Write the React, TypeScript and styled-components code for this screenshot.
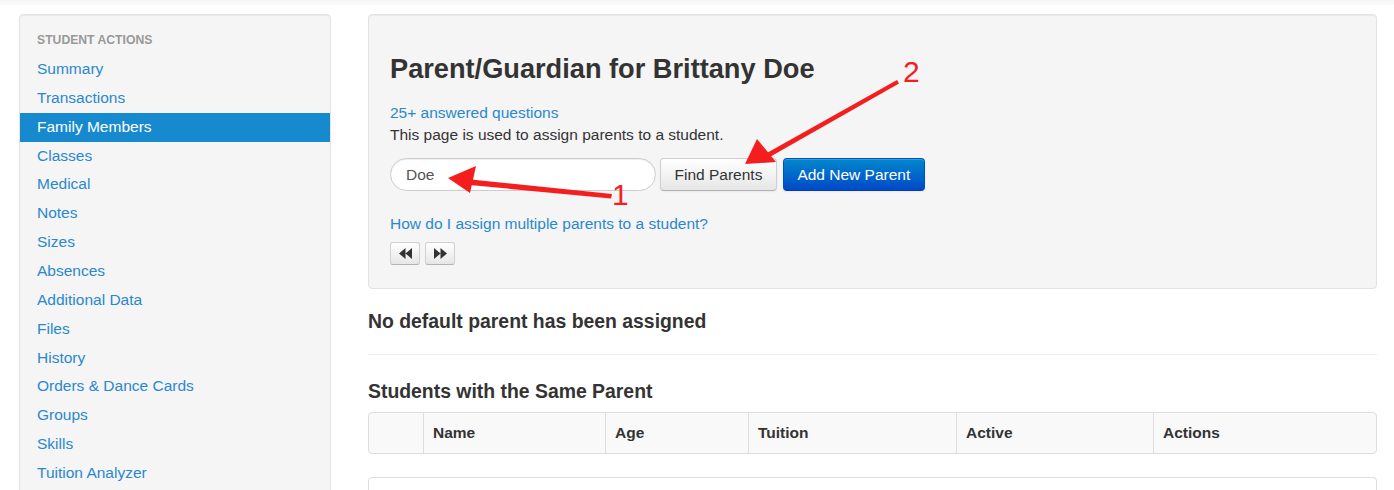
import React from 'react';
import styled, { createGlobalStyle } from 'styled-components';

const GlobalStyle = createGlobalStyle`
  html, body {
    margin: 0;
    padding: 0;
    background: #fff;
    font-family: "Liberation Sans", Arial, sans-serif;
    color: #333;
  }
`;

const MENU = [
  'Summary',
  'Transactions',
  'Family Members',
  'Classes',
  'Medical',
  'Notes',
  'Sizes',
  'Absences',
  'Additional Data',
  'Files',
  'History',
  'Orders & Dance Cards',
  'Groups',
  'Skills',
  'Tuition Analyzer',
];

const COLUMNS = [
  { label: '', width: 54 },
  { label: 'Name', width: 182 },
  { label: 'Age', width: 143 },
  { label: 'Tuition', width: 208 },
  { label: 'Active', width: 197 },
  { label: 'Actions', width: 0 },
];

function RewindIcon({ flip }: { flip?: boolean }) {
  return (
    <svg width="15" height="13" viewBox="0 0 15 13" style={flip ? { transform: 'scaleX(-1)' } : undefined}>
      <path d="M7.5 1 L1 6.5 L7.5 12 Z M14 1 L7.5 6.5 L14 12 Z" fill="#333" />
    </svg>
  );
}

function Annotations() {
  return (
    <Overlay width="1394" height="490" viewBox="0 0 1394 490">
      <g fill="#f51e1e" stroke="none">
        <path d="M612 194 L471 179.5 L470 185 L611 198.5 Z" />
        <path d="M448 178 L476 166 L470 193 Z" />
        <path d="M897 80 L899 83.5 L768 158 L765 154 Z" />
        <path d="M745 164 L757 139 L776 162 Z" />
      </g>
      <AnnotationLabel x="612" y="205">1</AnnotationLabel>
      <AnnotationLabel x="903" y="82">2</AnnotationLabel>
    </Overlay>
  );
}

export default function App() {
  return (
    <>
      <GlobalStyle />
      <Page>
        <TopBar />
        <Layout>
          <Sidebar>
            <SidebarHeader>STUDENT ACTIONS</SidebarHeader>
            {MENU.map((item) => (
              <MenuItem key={item} active={item === 'Family Members'}>
                {item}
              </MenuItem>
            ))}
          </Sidebar>
          <Main>
            <Panel>
              <Title>Parent/Guardian for Brittany Doe</Title>
              <Link>25+ answered questions</Link>
              <Text>This page is used to assign parents to a student.</Text>
              <SearchRow>
                <SearchInput defaultValue="Doe" />
                <Button>Find Parents</Button>
                <Button primary>Add New Parent</Button>
              </SearchRow>
              <HelpLink>How do I assign multiple parents to a student?</HelpLink>
              <NavButtons>
                <SmallButton>
                  <RewindIcon />
                </SmallButton>
                <SmallButton>
                  <RewindIcon flip />
                </SmallButton>
              </NavButtons>
            </Panel>
            <SectionTitle>No default parent has been assigned</SectionTitle>
            <Divider />
            <SubTitle>Students with the Same Parent</SubTitle>
            <TableHead>
              {COLUMNS.map((col, i) => (
                <HeadCell key={i} first={i === 0} style={col.width ? { width: col.width } : { flex: 1 }}>
                  {col.label}
                </HeadCell>
              ))}
            </TableHead>
            <EmptyBox />
          </Main>
        </Layout>
        <Annotations />
      </Page>
    </>
  );
}

const Page = styled.div`
  position: relative;
  width: 1394px;
  height: 490px;
  overflow: hidden;
`;

const TopBar = styled.div`
  height: 5px;
  background: linear-gradient(#f5f5f5, #fbfbfb);
`;

const Layout = styled.div`
  display: flex;
  align-items: flex-start;
  gap: 37px;
  padding: 9px 17px 0 19px;
`;

const Sidebar = styled.nav`
  width: 312px;
  flex-shrink: 0;
  box-sizing: border-box;
  background: #f5f5f5;
  border: 1px solid #e3e3e3;
  border-radius: 4px;
  padding: 15px 0 40px;
  box-shadow: inset 0 1px 1px rgba(0, 0, 0, 0.05);
`;

const SidebarHeader = styled.div`
  padding-left: 17px;
  font-size: 12.2px;
  line-height: 21px;
  font-weight: bold;
  color: #999;
  margin-bottom: 4px;
`;

const MenuItem = styled.div<{ active?: boolean }>`
  padding-left: 17px;
  font-size: 15.5px;
  line-height: 28.86px;
  height: 28.86px;
  color: ${(p) => (p.active ? '#fff' : '#2a88cf')};
  background: ${(p) => (p.active ? '#178acf' : 'transparent')};
`;

const Main = styled.div`
  flex: 1;
  display: flex;
  flex-direction: column;
`;

const Panel = styled.div`
  background: #f5f5f5;
  border: 1px solid #e3e3e3;
  border-radius: 4px;
  padding: 36px 21px 23px;
  box-shadow: inset 0 1px 1px rgba(0, 0, 0, 0.05);
`;

const Title = styled.h1`
  margin: 0 0 15px;
  font-size: 27.2px;
  line-height: 36px;
  font-weight: bold;
  color: #333;
`;

const Link = styled.div`
  font-size: 15.5px;
  line-height: 22px;
  color: #2a88cf;
`;

const Text = styled.div`
  font-size: 15.5px;
  line-height: 22px;
  color: #333;
`;

const SearchRow = styled.div`
  display: flex;
  gap: 4px;
  margin-top: 12px;
`;

const SearchInput = styled.input`
  width: 266px;
  height: 33px;
  box-sizing: border-box;
  border: 1px solid #ccc;
  border-radius: 17px;
  padding: 0 15px;
  font-family: inherit;
  font-size: 15.5px;
  color: #555;
  background: #fff;
  outline: none;
  box-shadow: inset 0 1px 1px rgba(0, 0, 0, 0.075);
`;

const Button = styled.button<{ primary?: boolean }>`
  height: 33px;
  box-sizing: border-box;
  padding: 0 13.5px;
  font-family: inherit;
  font-size: 15.5px;
  border-radius: 4px;
  margin-left: ${(p) => (p.primary ? '2px' : '0')};
  color: ${(p) => (p.primary ? '#fff' : '#333')};
  border: 1px solid ${(p) => (p.primary ? '#0050c0' : '#cfcfcf')};
  border-bottom-color: ${(p) => (p.primary ? '#003fa0' : '#b3b3b3')};
  background: ${(p) =>
    p.primary ? 'linear-gradient(#0088cc, #0048c8)' : 'linear-gradient(#ffffff, #e6e6e6)'};
  box-shadow: inset 0 1px 0 rgba(255, 255, 255, 0.2), 0 1px 2px rgba(0, 0, 0, 0.05);
`;

const HelpLink = styled(Link)`
  margin-top: 22px;
`;

const NavButtons = styled.div`
  display: flex;
  gap: 5px;
  margin-top: 7px;
`;

const SmallButton = styled.button`
  width: 30px;
  height: 23px;
  box-sizing: border-box;
  padding: 0;
  display: flex;
  align-items: center;
  justify-content: center;
  border: 1px solid #d0d0d0;
  border-bottom-color: #b3b3b3;
  border-radius: 3px;
  background: linear-gradient(#ffffff, #e6e6e6);
`;

const SectionTitle = styled.h3`
  margin: 19px 0 0;
  font-size: 19.4px;
  line-height: 26px;
  font-weight: bold;
  color: #333;
`;

const SubTitle = styled(SectionTitle)`
  margin-top: 23px;
`;

const Divider = styled.hr`
  margin: 20px 0 0;
  border: 0;
  border-top: 1px solid #eee;
`;

const TableHead = styled.div`
  display: flex;
  margin-top: 8px;
  height: 42px;
  box-sizing: border-box;
  border: 1px solid #ddd;
  border-radius: 4px;
  background: #f9f9f9;
`;

const HeadCell = styled.div<{ first?: boolean }>`
  box-sizing: border-box;
  padding-left: 9px;
  display: flex;
  align-items: center;
  font-size: 15.5px;
  font-weight: bold;
  color: #333;
  border-left: ${(p) => (p.first ? 'none' : '1px solid #ddd')};
`;

const EmptyBox = styled.div`
  margin-top: 23px;
  height: 40px;
  border: 1px solid #ddd;
  border-radius: 4px;
  background: #fff;
`;

const Overlay = styled.svg`
  position: absolute;
  top: 0;
  left: 0;
  pointer-events: none;
`;

const AnnotationLabel = styled.text`
  font-family: "Liberation Sans", Arial, sans-serif;
  font-size: 30px;
  fill: #f51e1e;
`;
